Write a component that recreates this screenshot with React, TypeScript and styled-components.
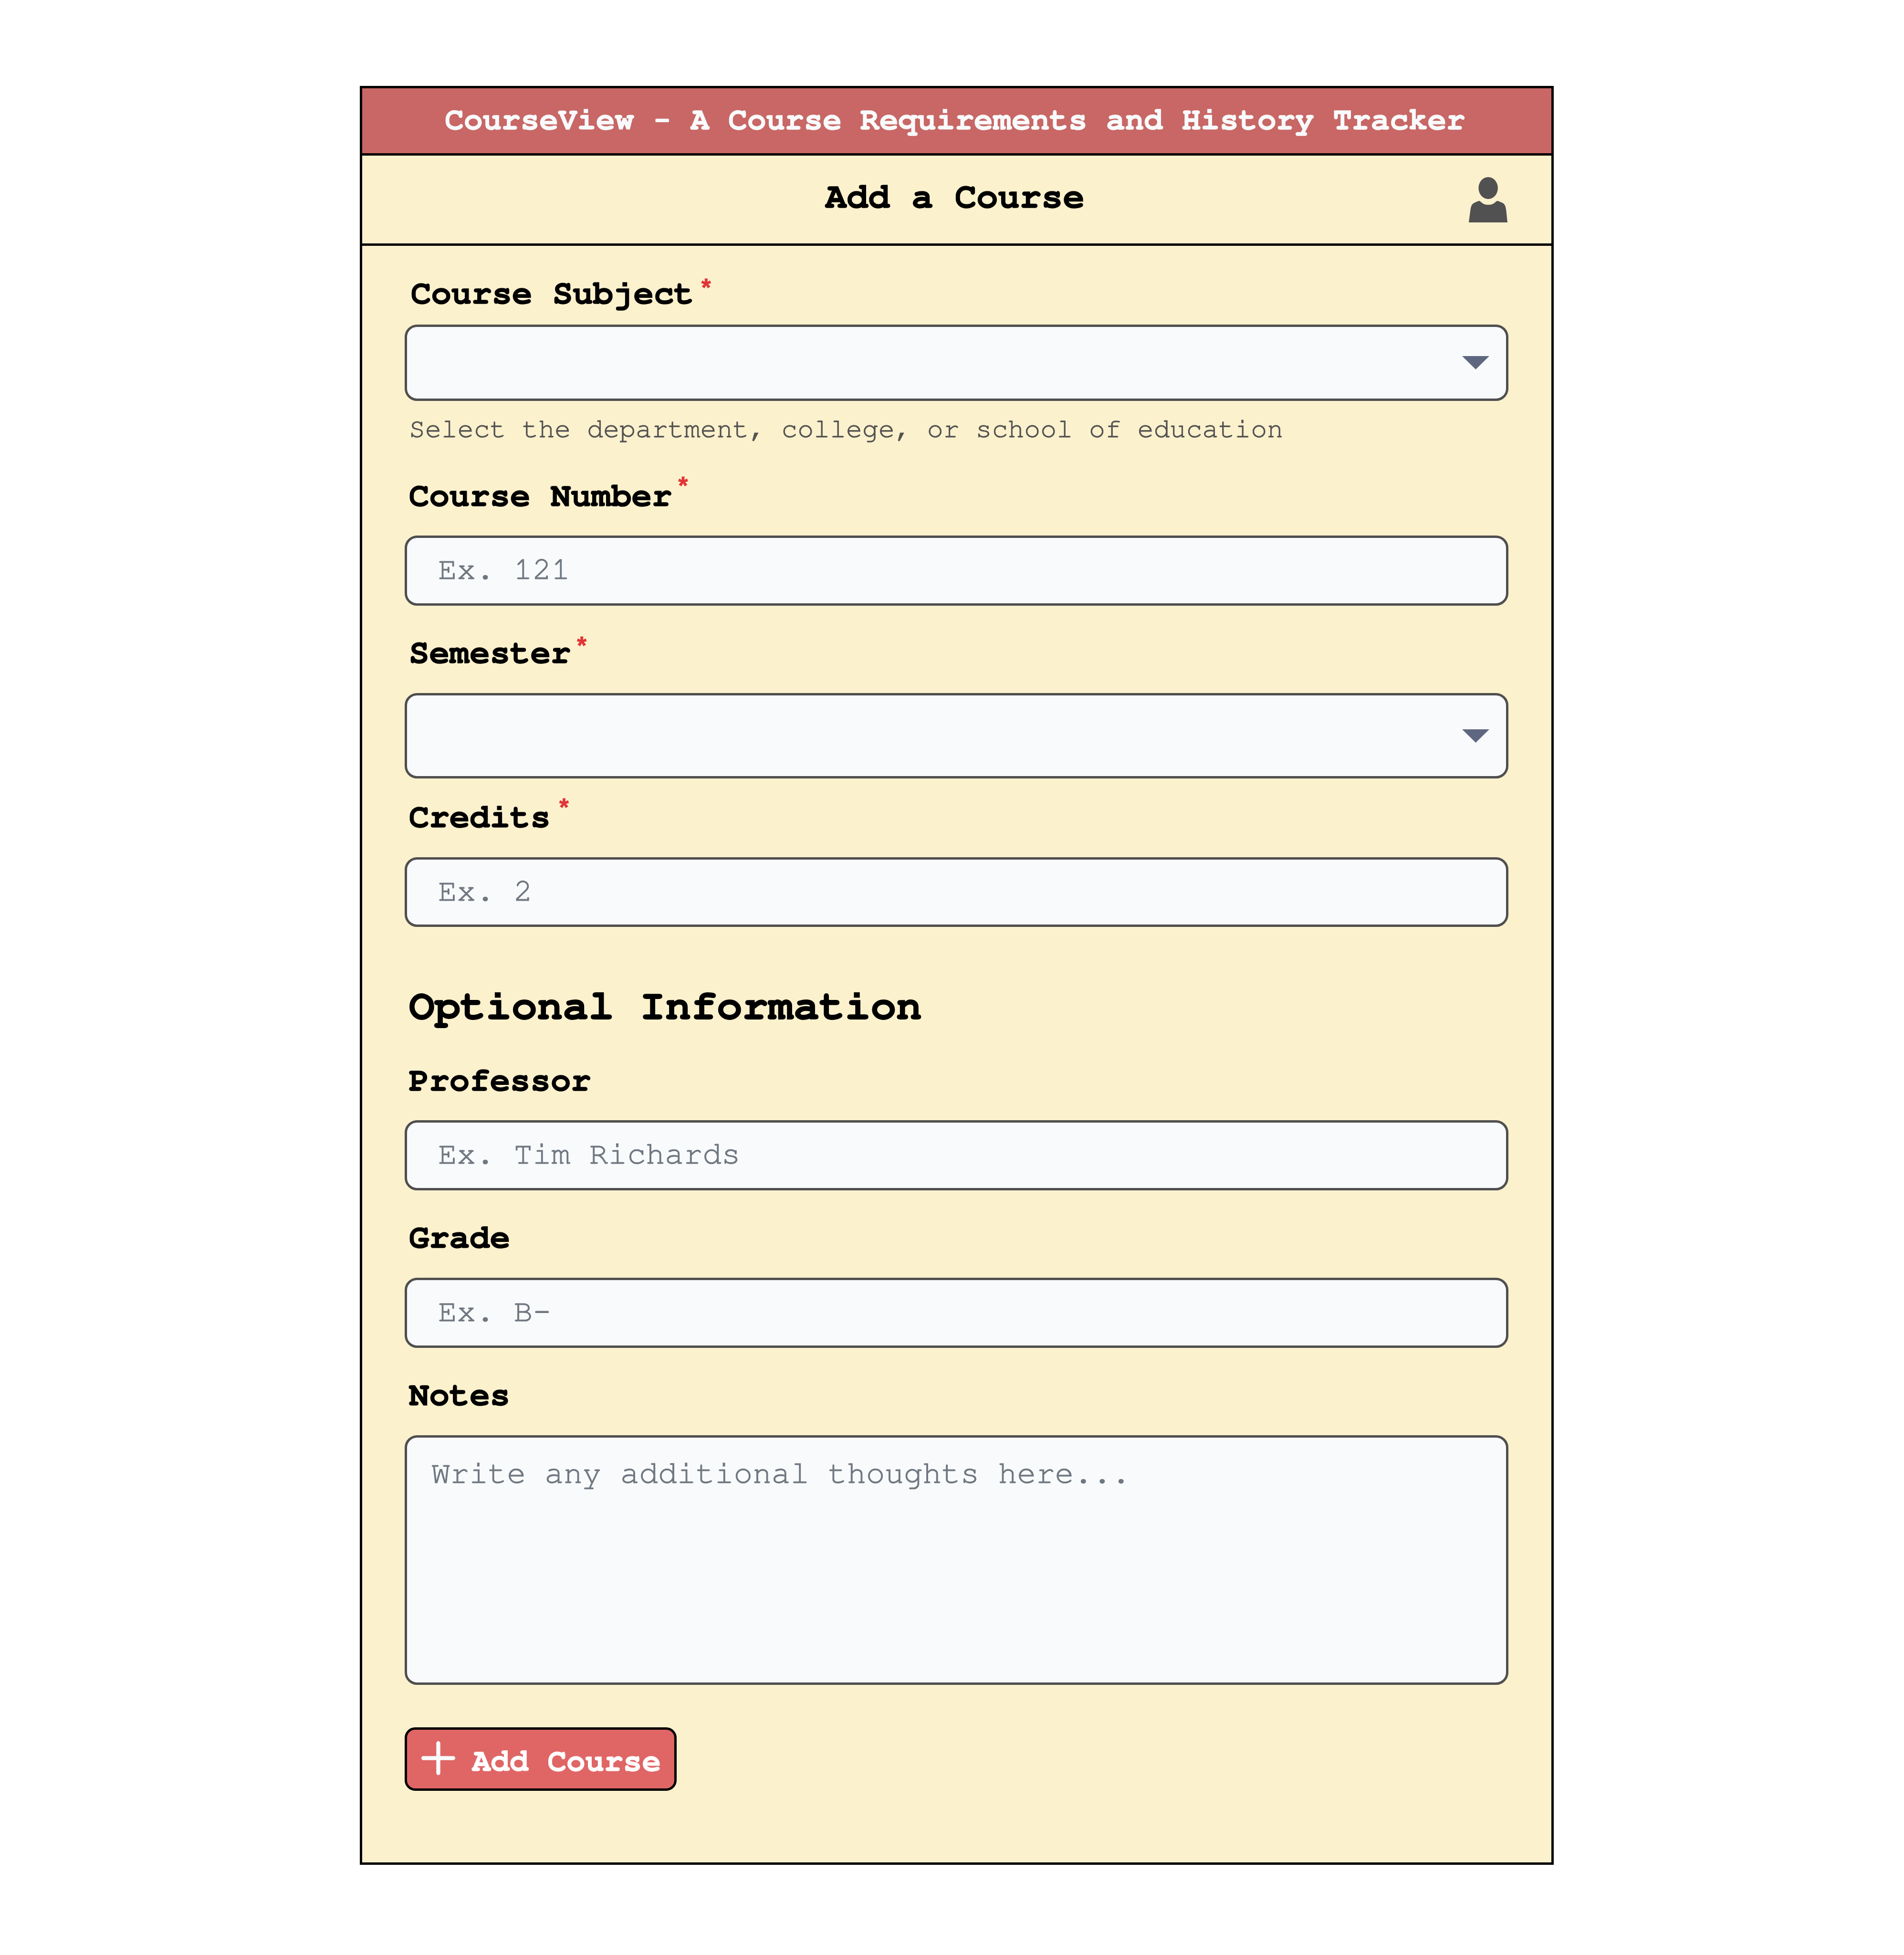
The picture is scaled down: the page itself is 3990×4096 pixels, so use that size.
import React from "react";
import styled, { createGlobalStyle } from "styled-components";

const color = {
  ink: "#000000",
  outline: "#4f4f4f",
  muted: "#515151",
  placeholder: "#6f7780",
  cream: "#fcf1cd",
  paper: "#f9fafc",
  brand: "#c86765",
  action: "#e06666",
  required: "#e03537",
  caret: "#5f6780",
};

const GlobalStyle = createGlobalStyle`
  *, *::before, *::after { box-sizing: border-box; }
  body {
    margin: 0;
    background: #ffffff;
    font-family: "FreeMono", "Liberation Mono", monospace;
    color: ${color.ink};
  }
`;

const Page = styled.div`
  width: 3990px;
  height: 4096px;
  padding: 180px 734px 189px 754px;
  background: #ffffff;
  overflow: hidden;
`;

const Frame = styled.main`
  display: flex;
  flex-direction: column;
  width: 2502px;
  height: 3727px;
  border: 5px solid ${color.ink};
  background: ${color.cream};
`;

const Banner = styled.header`
  display: flex;
  align-items: center;
  justify-content: center;
  flex: none;
  height: 141px;
  padding: 0 7px 4px 0;
  border-bottom: 5px solid ${color.ink};
  background: ${color.brand};
  color: ${color.paper};
  font-size: 66px;
  font-weight: 700;
  line-height: 80px;
  white-space: pre;
  -webkit-text-stroke: 1.3px ${color.paper};
`;

/* A narrower, heavier hyphen than the body face has. */
const Dash = styled.span`
  font-family: "Courier Prime", "FreeMono", "Liberation Mono", monospace;
  line-height: 0;
  -webkit-text-stroke-width: 0;
`;

const TitleBar = styled.div`
  display: grid;
  grid-template-columns: 1fr auto 1fr;
  align-items: center;
  flex: none;
  height: 189px;
  padding: 0 92px 0 84px;
  border-bottom: 5px solid ${color.ink};
`;

const Title = styled.h1`
  grid-column: 2;
  margin: 0;
  padding-bottom: 11px;
  font-size: 75.5px;
  font-weight: 700;
  -webkit-text-stroke: 1.4px ${color.ink};
`;

const UserIcon = styled.svg`
  grid-column: 3;
  justify-self: end;
  width: 81px;
  height: 95px;
  fill: ${color.muted};
`;

const Form = styled.form`
  display: flex;
  flex-direction: column;
  align-items: stretch;
  padding: 0 90px 0 89px;
`;

const Field = styled.div<{ $above: number }>`
  display: flex;
  flex-direction: column;
  margin-top: ${(p) => p.$above}px;
`;

const Label = styled.div<{ $gap: number; $indent: number }>`
  display: flex;
  align-items: flex-start;
  height: 80px;
  margin-bottom: ${(p) => p.$gap}px;
  padding-left: ${(p) => p.$indent}px;
  font-size: 70.7px;
  font-weight: 700;
  line-height: 76px;
  white-space: pre;
  -webkit-text-stroke: 1.4px ${color.ink};
`;

const Star = styled.span<{ $left: number; $top: number }>`
  margin: ${(p) => p.$top}px 0 0 ${(p) => p.$left}px;
  color: ${color.required};
  font-family: "Liberation Sans", Arial, sans-serif;
  font-size: 51px;
  line-height: 51px;
  -webkit-text-stroke: 0.8px ${color.required};
`;

const Control = styled.div<{ $height: number; $inset?: number; $multiline?: boolean }>`
  display: flex;
  align-items: ${(p) => (p.$multiline ? "flex-start" : "center")};
  height: ${(p) => p.$height}px;
  padding: ${(p) => (p.$multiline ? "35px 35px 0" : "0 35px 5px")} ${(p) => p.$inset ?? 65}px;
  border: 5px solid ${color.outline};
  border-radius: 26px;
  background: ${color.paper};
  color: ${color.placeholder};
  font-size: 66px;
  line-height: 80px;
  white-space: pre;
  -webkit-text-stroke: 1.1px ${color.placeholder};
`;

const Picker = styled(Control)`
  justify-content: flex-end;
  padding: 0 35px;
`;

const Caret = styled.svg`
  width: 57px;
  height: 28px;
  fill: ${color.caret};
`;

const Hint = styled.p`
  height: 64px;
  margin: 29px 0 0;
  padding-left: 9px;
  color: ${color.muted};
  font-size: 56.55px;
  line-height: 61px;
  white-space: pre;
  -webkit-text-stroke: 0.9px ${color.muted};
`;

const SectionHeading = styled.h2`
  height: 100px;
  margin: 119px 0 0;
  padding-left: 9px;
  font-size: 89.6px;
  font-weight: 700;
  line-height: 94px;
  white-space: pre;
  -webkit-text-stroke: 1.8px ${color.ink};
`;

const SubmitButton = styled.button`
  display: flex;
  align-items: center;
  align-self: flex-start;
  width: 570px;
  height: 133px;
  margin-top: 89px;
  padding: 0 0 0 30px;
  border: 5px solid ${color.ink};
  border-radius: 22px;
  background: ${color.action};
  color: #ffffff;
  font-family: inherit;
  font-size: 66px;
  font-weight: 700;
  line-height: 80px;
  white-space: pre;
`;

const PlusIcon = styled.svg`
  flex: none;
  width: 71px;
  height: 71px;
  margin: 0 35px 4px 0;
  stroke: ${color.paper};
  stroke-width: 8.4;
  stroke-linecap: round;
`;

const ButtonText = styled.span`
  padding-top: 8px;
  -webkit-text-stroke: 1.3px #ffffff;
`;

type LabelInfo = {
  text: string;
  gap: number;
  indent?: number;
  star?: [left: number, top: number];
};

function FieldLabel({ text, gap, indent = 9, star }: LabelInfo) {
  return (
    <Label $gap={gap} $indent={indent}>
      <span>{text}</span>
      {star && (
        <Star $left={star[0]} $top={star[1]}>
          *
        </Star>
      )}
    </Label>
  );
}

function DownCaret() {
  return (
    <Caret viewBox="0 0 57 28" preserveAspectRatio="none">
      <path d="M0 0H57L28.5 28Z" />
    </Caret>
  );
}

export default function App() {
  return (
    <>
      <GlobalStyle />
      <Page>
        <Frame>
          <Banner>
            <span>
              CourseView <Dash>-</Dash> A Course Requirements and History Tracker
            </span>
          </Banner>
          <TitleBar>
            <Title>Add a Course</Title>
            <UserIcon viewBox="193 70 258 301" preserveAspectRatio="none">
              <ellipse cx="322.5" cy="143" rx="64.5" ry="73" />
              <path d="M193 371L203 294C207 266 211 256 219 248C227 241 243 233 258 229C264 227 268 229 272 233C287 248 301 254 323 254C345 254 360 247 374 233C379 228 383 227 389 229C401 233 413 238 423 244C434 251 440 266 443 294L451 371Z" />
            </UserIcon>
          </TitleBar>
          <Form>
            <Field $above={62}>
              <FieldLabel text="Course Subject" gap={23} indent={13} star={[15, 0]} />
              <Picker $height={160}>
                <DownCaret />
              </Picker>
              <Hint>Select the department, college, or school of education</Hint>
            </Field>
            <Field $above={68}>
              <FieldLabel text="Course Number" gap={41} star={[13, -9]} />
              <Control $height={147}>Ex. 121</Control>
            </Field>
            <Field $above={61}>
              <FieldLabel text="Semester" gap={42} star={[13, -3]} />
              <Picker $height={179}>
                <DownCaret />
              </Picker>
            </Field>
            <Field $above={43}>
              <FieldLabel text="Credits" gap={42} star={[18, -8]} />
              <Control $height={146}>Ex. 2</Control>
            </Field>
            <SectionHeading>Optional Information</SectionHeading>
            <Field $above={65}>
              <FieldLabel text="Professor" gap={41} />
              <Control $height={147}>Ex. Tim Richards</Control>
            </Field>
            <Field $above={61}>
              <FieldLabel text="Grade" gap={42} />
              <Control $height={147}>
                <span>
                  Ex. B<Dash>-</Dash>
                </span>
              </Control>
            </Field>
            <Field $above={61}>
              <FieldLabel text="Notes" gap={42} />
              <Control $height={523} $inset={51} $multiline>
                Write any additional thoughts here...
              </Control>
            </Field>
            <SubmitButton type="button">
              <PlusIcon viewBox="0 0 71 71">
                <path d="M35.5 4.2V66.8M4.2 35.5H66.8" />
              </PlusIcon>
              <ButtonText>Add Course</ButtonText>
            </SubmitButton>
          </Form>
        </Frame>
      </Page>
    </>
  );
}
